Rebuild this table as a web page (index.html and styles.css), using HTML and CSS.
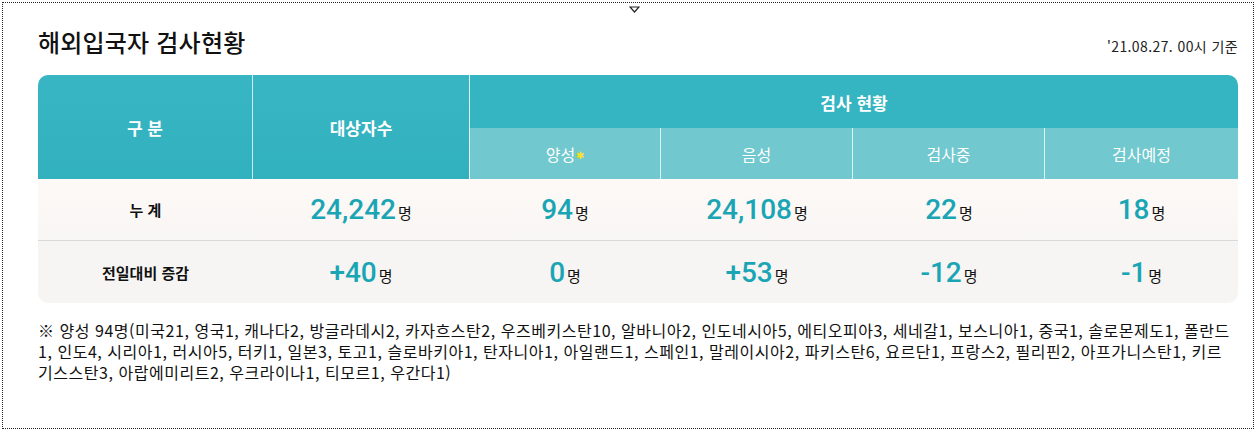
FILE: index.html
```html
<!DOCTYPE html>
<html lang="ko">
<head>
    <meta charset="UTF-8">
    <meta name="viewport" content="width=device-width, initial-scale=1.0">
    <title>해외입국자 검사현황</title>
    <link rel="stylesheet" href="styles.css">
</head>
<body>
    <div class="frame">
        <svg class="drop-mark" width="11" height="7" viewBox="0 0 11 7">
            <polygon points="1,1 10,1 5.5,6" fill="none" stroke="#222" stroke-width="1.2"/>
        </svg>

        <div class="head">
            <h2 class="title">해외입국자 검사현황</h2>
            <span class="date">'21.08.27. 00시 기준</span>
        </div>

        <div class="table-wrap">
            <table class="status">
                <colgroup>
                    <col style="width: 215px">
                    <col style="width: 216px">
                    <col style="width: 192px">
                    <col style="width: 192px">
                    <col style="width: 192px">
                    <col style="width: 193px">
                </colgroup>
                <thead>
                    <tr class="top">
                        <th rowspan="2" class="sep">구 분</th>
                        <th rowspan="2" class="sep">대상자수</th>
                        <th colspan="4" class="group">검사 현황</th>
                    </tr>
                    <tr class="sub">
                        <th class="sep first">양성<span class="star">✱</span></th>
                        <th class="sep">음성</th>
                        <th class="sep">검사중</th>
                        <th>검사예정</th>
                    </tr>
                </thead>
                <tbody>
                    <tr class="total">
                        <td class="label">누 계</td>
                        <td><span class="num">24,242</span><span class="unit">명</span></td>
                        <td><span class="num">94</span><span class="unit">명</span></td>
                        <td><span class="num">24,108</span><span class="unit">명</span></td>
                        <td><span class="num">22</span><span class="unit">명</span></td>
                        <td><span class="num">18</span><span class="unit">명</span></td>
                    </tr>
                    <tr class="diff">
                        <td class="label">전일대비 증감</td>
                        <td><span class="num">+40</span><span class="unit">명</span></td>
                        <td><span class="num">0</span><span class="unit">명</span></td>
                        <td><span class="num">+53</span><span class="unit">명</span></td>
                        <td><span class="num">-12</span><span class="unit">명</span></td>
                        <td><span class="num">-1</span><span class="unit">명</span></td>
                    </tr>
                </tbody>
            </table>
        </div>

        <p class="note">※ 양성 94명(미국21, 영국1, 캐나다2, 방글라데시2, 카자흐스탄2, 우즈베키스탄10, 알바니아2, 인도네시아5, 에티오피아3, 세네갈1, 보스니아1, 중국1, 솔로몬제도1, 폴란드1, 인도4, 시리아1, 러시아5, 터키1, 일본3, 토고1, 슬로바키아1, 탄자니아1, 아일랜드1, 스페인1, 말레이시아2, 파키스탄6, 요르단1, 프랑스2, 필리핀2, 아프가니스탄1, 키르기스스탄3, 아랍에미리트2, 우크라이나1, 티모르1, 우간다1)</p>
    </div>
</body>
</html>
```

FILE: styles.css
```css
* {
    box-sizing: border-box;
}

body {
    margin: 0;
    font-family: 'Noto Sans CJK KR', 'Noto Sans', sans-serif;
    color: #111;
    background: #fff;
}

.frame {
    position: relative;
    margin: 2px;
    height: 427px;
    border: 1px dotted #222;
    padding: 24px 15px 0 35px;
}

.drop-mark {
    position: absolute;
    left: 626px;
    top: 3px;
}

.head {
    display: flex;
    justify-content: space-between;
    align-items: center;
    margin-bottom: 18px;
}

.title {
    margin: 0;
    font-size: 24px;
    line-height: 30px;
    font-weight: 500;
    letter-spacing: 0.2px;
    color: #111;
}

.date {
    padding-top: 8px;
    font-size: 14px;
    letter-spacing: 0.4px;
    color: #222;
}

.table-wrap {
    border-radius: 10px;
    overflow: hidden;
}

.status {
    width: 1200px;
    table-layout: fixed;
    border-collapse: separate;
    border-spacing: 0;
}

.status th {
    color: #fff;
    text-align: center;
    padding: 0;
}

.status .top th {
    background: #35b4c2;
    font-size: 17px;
    font-weight: bold;
    height: 53px;
}

.status .top th[rowspan] {
    background: linear-gradient(180deg, #38b6c3 0%, #31b0be 100%);
}

.status .top .group {
    border-left: 1px solid rgba(255,255,255,0.85);
    padding-top: 2px;
}

.status .sub th {
    background: #71c8ce;
    font-size: 16px;
    font-weight: normal;
    height: 51px;
}

.status .sub .first {
    border-left: 1px solid rgba(255,255,255,0.85);
}

.status th.sep {
    border-right: 1px solid rgba(255,255,255,0.75);
}

.status .top th.sep:nth-child(2) {
    border-right: none;
}

.star {
    color: #ffe01a;
    font-size: 10px;
    vertical-align: 2px;
    margin-left: 1px;
}

.status td {
    text-align: center;
    height: 62px;
    padding: 0;
}

.status .total td {
    background: linear-gradient(180deg, #fdf9f7 0%, #f8f6f4 100%);
    border-bottom: 1px solid #d9d9d9;
}

.status .diff td {
    background: #f6f5f3;
}

.label {
    font-size: 15px;
    font-weight: bold;
    color: #111;
}

.num {
    font-family: Roboto, 'Noto Sans', sans-serif;
    font-size: 28px;
    font-weight: 500;
    color: #1aa5b5;
}

.unit {
    font-size: 15px;
    margin-left: 2px;
    color: #111;
}

.note {
    margin: 17px 0 0;
    padding-right: 4px;
    font-size: 16px;
    line-height: 21px;
    letter-spacing: 0.53px;
    color: #111;
}
```
